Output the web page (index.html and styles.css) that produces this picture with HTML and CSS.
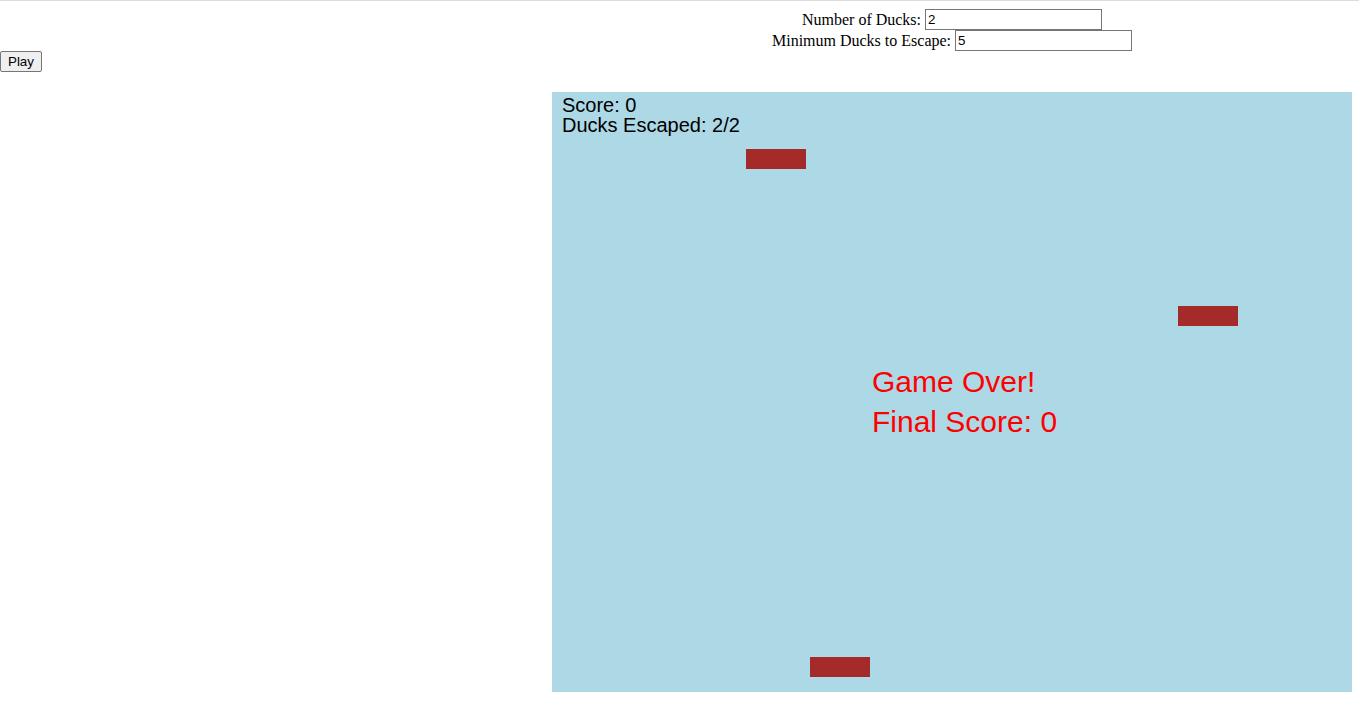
FILE: index.html
```html
<!DOCTYPE html>
<html>
<head>
<meta charset="utf-8">
<link rel="stylesheet" href="styles.css">
</head>
<body>
<div class="topline"></div>
<div class="controls">
  <div class="row"><label for="n">Number of Ducks:</label> <input id="n" type="text" value="2"></div>
  <div class="row"><label for="m">Minimum Ducks to Escape:</label> <input id="m" type="text" value="5"></div>
</div>
<div class="bar"><button class="play">Play</button></div>
<div class="game">
  <div class="hud score">Score: 0</div>
  <div class="hud escaped">Ducks Escaped: 2/2</div>
  <div class="duck d1"></div>
  <div class="duck d2"></div>
  <div class="duck d3"></div>
  <div class="over l1">Game Over!</div>
  <div class="over l2">Final Score: 0</div>
</div>
</body>
</html>
```

FILE: styles.css
```css
html, body {
  margin: 0;
  padding: 0;
  background: #fff;
}
body {
  font-family: "Liberation Serif", "Times New Roman", serif;
  font-size: 16px;
}
.topline {
  height: 0;
  border-top: 1px solid #dcdcdc;
}
.controls {
  margin-left: 552px;
  width: 800px;
  text-align: center;
  padding-top: 8px;
}
.row {
  height: 21px;
  line-height: 21px;
}
.row input {
  font-family: "Liberation Sans", Arial, sans-serif;
  font-size: 13.33px;
  width: 171px;
  height: 17px;
  padding: 1px 2px;
  border: 1px solid #767676;
  border-radius: 0;
  margin: 0;
  vertical-align: top;
  box-sizing: content-box;
}
.bar {
  height: 21px;
}
.play {
  font-family: "Liberation Sans", Arial, sans-serif;
  font-size: 13.33px;
  margin: 0;
  height: 21px;
  padding: 1px 7px;
  border: 1px solid #767676;
  border-radius: 2px;
  background: #efefef;
  color: #000;
}
.game {
  position: relative;
  margin-left: 552px;
  margin-top: 20px;
  width: 800px;
  height: 600px;
  background: #add8e6;
  overflow: hidden;
  font-family: "Liberation Sans", Arial, sans-serif;
}
.hud {
  position: absolute;
  left: 10px;
  font-size: 20px;
  line-height: 20px;
  color: #000;
  white-space: nowrap;
}
.score { top: 3px; }
.escaped { top: 23px; }
.over {
  position: absolute;
  left: 320px;
  font-size: 30px;
  line-height: 30px;
  color: #ff0000;
  white-space: nowrap;
}
.l1 { top: 275px; }
.l2 { top: 315px; }
.duck {
  position: absolute;
  width: 60px;
  height: 20px;
  background: #a52a2a;
}
.d1 { left: 194px; top: 57px; }
.d2 { left: 626px; top: 214px; }
.d3 { left: 258px; top: 565px; }
```
